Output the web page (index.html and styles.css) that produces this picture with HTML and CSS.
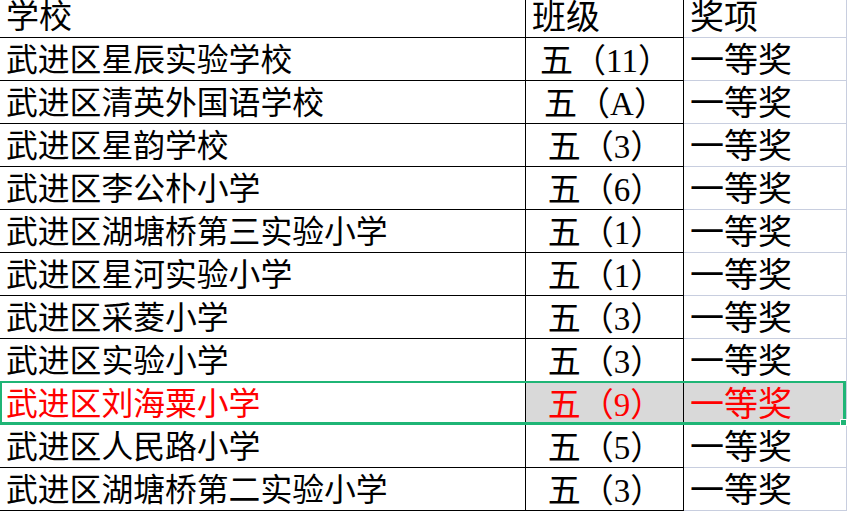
FILE: index.html
```html
<!DOCTYPE html>
<html lang="zh">
<head>
<meta charset="utf-8">
<link rel="stylesheet" href="styles.css">
</head>
<body>
<div class="sheet">
  <div class="grid">
    <div class="c c1 hd">学校</div><div class="c c2 hd left">班级</div><div class="c c3 hd">奖项</div>
    <div class="c c1">武进区星辰实验学校</div><div class="c c2">五（11）</div><div class="c c3">一等奖</div>
    <div class="c c1">武进区清英外国语学校</div><div class="c c2">五（A）</div><div class="c c3">一等奖</div>
    <div class="c c1">武进区星韵学校</div><div class="c c2">五（3）</div><div class="c c3">一等奖</div>
    <div class="c c1">武进区李公朴小学</div><div class="c c2">五（6）</div><div class="c c3">一等奖</div>
    <div class="c c1">武进区湖塘桥第三实验小学</div><div class="c c2">五（1）</div><div class="c c3">一等奖</div>
    <div class="c c1">武进区星河实验小学</div><div class="c c2">五（1）</div><div class="c c3">一等奖</div>
    <div class="c c1">武进区采菱小学</div><div class="c c2">五（3）</div><div class="c c3">一等奖</div>
    <div class="c c1">武进区实验小学</div><div class="c c2">五（3）</div><div class="c c3">一等奖</div>
    <div class="c c1 red">武进区刘海粟小学</div><div class="c c2 red sel">五（9）</div><div class="c c3 red sel">一等奖</div>
    <div class="c c1">武进区人民路小学</div><div class="c c2">五（5）</div><div class="c c3">一等奖</div>
    <div class="c c1">武进区湖塘桥第二实验小学</div><div class="c c2">五（3）</div><div class="c c3">一等奖</div>
  </div>
  <div class="selection"><span class="handle"></span></div>
</div>
</body>
</html>
```

FILE: styles.css
```css
html, body {
  margin: 0;
  padding: 0;
  background: #ffffff;
  overflow: hidden;
}
.sheet {
  position: relative;
  width: 847px;
  height: 513px;
  overflow: hidden;
}
.grid {
  display: grid;
  grid-template-columns: 526px 158px 163px;
  grid-template-rows: 38px;
  grid-auto-rows: 43px;
  font-family: "Liberation Serif", "Noto Sans CJK SC", serif;
  font-size: 31.8px;
  color: #000;
}
.c {
  box-sizing: border-box;
  display: flex;
  align-items: center;
  padding-top: 4px;
  white-space: nowrap;
  border-bottom: 1px solid #000;
  border-right: 1px solid #000;
  line-height: 1;
}
.c1 {
  padding-left: 6px;
}
.c2 {
  justify-content: center;
  font-size: 33px;
  padding-left: 2px;
}
.c2.left {
  justify-content: flex-start;
  padding-left: 6px;
  font-size: 34px;
}
.c3 {
  padding-left: 6px;
  font-size: 34px;
  border-bottom-color: #c8cedf;
  border-right-color: #c8cedf;
}
.hd {
  align-items: flex-start;
  padding-top: 1px;
}
.c1.hd {
  font-size: 33px;
}
.red {
  color: #ff0000;
}
.sel {
  background: #d9d9d9;
}
.selection {
  position: absolute;
  left: 0;
  top: 381px;
  width: 846px;
  height: 44px;
  box-sizing: border-box;
  border: 2px solid #1fb576;
  border-right-width: 3px;
  border-bottom-width: 3px;
  pointer-events: none;
}
.handle {
  position: absolute;
  right: -4px;
  bottom: -4px;
  width: 5px;
  height: 5px;
  background: #1fb576;
  border: 1px solid #fff;
}
```
